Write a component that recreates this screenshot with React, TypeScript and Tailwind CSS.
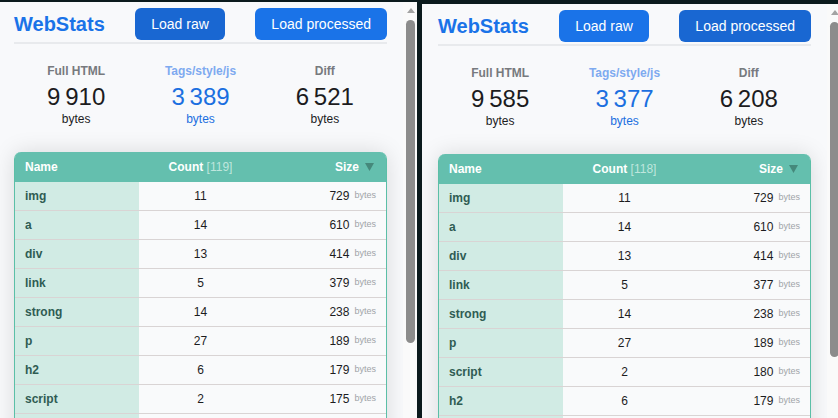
import type { ReactNode } from "react";

type Row = { name: string; count: number; size: number };

interface PanelData {
  full: string;
  tags: string;
  diff: string;
  total: number;
  rows: Row[];
  activeRaw: boolean;
}

const left: PanelData = {
  full: "9\u2009910",
  tags: "3\u2009389",
  diff: "6\u2009521",
  total: 119,
  activeRaw: true,
  rows: [
    { name: "img", count: 11, size: 729 },
    { name: "a", count: 14, size: 610 },
    { name: "div", count: 13, size: 414 },
    { name: "link", count: 5, size: 379 },
    { name: "strong", count: 14, size: 238 },
    { name: "p", count: 27, size: 189 },
    { name: "h2", count: 6, size: 179 },
    { name: "script", count: 2, size: 175 },
    { name: "span", count: 9, size: 160 },
  ],
};

const right: PanelData = {
  full: "9\u2009585",
  tags: "3\u2009377",
  diff: "6\u2009208",
  total: 118,
  activeRaw: false,
  rows: [
    { name: "img", count: 11, size: 729 },
    { name: "a", count: 14, size: 610 },
    { name: "div", count: 13, size: 414 },
    { name: "link", count: 5, size: 377 },
    { name: "strong", count: 14, size: 238 },
    { name: "p", count: 27, size: 189 },
    { name: "script", count: 2, size: 180 },
    { name: "h2", count: 6, size: 179 },
    { name: "span", count: 9, size: 160 },
  ],
};

function Stat({ label, value, blue }: { label: string; value: string; blue?: boolean }) {
  return (
    <div className="flex flex-col items-center">
      <div className={`text-[12px] font-bold leading-[14px] ${blue ? "text-[#7eaaf0]" : "text-[#777a7e]"}`}>
        {label}
      </div>
      <div className={`mt-[5px] text-[24px] leading-[28px] ${blue ? "text-[#1b6fe0]" : "text-[#1c1c1e]"}`}>
        {value}
      </div>
      <div className={`mt-[1px] text-[12px] leading-[14px] ${blue ? "text-[#1b6fe0]" : "text-[#1c1c1e]"}`}>bytes</div>
    </div>
  );
}

function Btn({ dark, children }: { dark: boolean; children: ReactNode }) {
  return (
    <button
      className={`h-8 rounded-[6px] px-4 text-[14px] text-white ${dark ? "bg-[#1967d2]" : "bg-[#1a73e8]"}`}
    >
      {children}
    </button>
  );
}

function Scrollbar({ thumb }: { thumb: number }) {
  return (
    <div className="w-[14px] shrink-0 bg-[#fafafa] pt-[6px]">
      <div className="ml-[3px] flex h-[5px] w-[9px] items-end justify-center">
        <svg width="8" height="5" viewBox="0 0 8 5">
          <path d="M0 5 L4 0 L8 5 Z" fill="#a3a3a3" />
        </svg>
      </div>
      <div className="ml-[3px] mt-[7px] w-[9px] rounded-full bg-[#8c8c8c]" style={{ height: thumb }} />
    </div>
  );
}

function Panel({ data, pl, thumb, className }: { data: PanelData; pl: string; thumb: number; className: string }) {
  return (
    <div className={`flex h-[418px] shrink-0 overflow-hidden bg-[#f8f9fb] ${className}`}>
      <div className={`w-[373px] shrink-0 pt-[6px] ${pl} box-content pr-[16px]`}>
        <div className="flex h-[36px] items-start justify-between border-b-2 border-[#e8eaed]">
          <div className="flex h-8 items-center text-[20px] font-bold text-[#1a73e8]">WebStats</div>
          <Btn dark={data.activeRaw}>Load raw</Btn>
          <Btn dark={!data.activeRaw}>Load processed</Btn>
        </div>

        <div className="grid grid-cols-3 pt-[20px]">
          <Stat label="Full HTML" value={data.full} />
          <Stat label="Tags/style/js" value={data.tags} blue />
          <Stat label="Diff" value={data.diff} />
        </div>

        <div className="mt-[26px] rounded-t-[7px] border-x border-[#5bbfa7] shadow-[0_0_22px_rgba(0,0,0,0.13)]">
          <div className="grid h-[30px] grid-cols-3 items-center rounded-t-[6px] bg-[#64bfae] text-[12px] font-bold text-white">
            <div className="pl-[10px]">Name</div>
            <div className="text-center">
              Count <span className="font-normal text-[#bfe6dd]">[{data.total}]</span>
            </div>
            <div className="flex items-center justify-end pr-[12px]">
              Size
              <svg className="ml-[6px]" width="9" height="8" viewBox="0 0 9 8">
                <path d="M0 0 L9 0 L4.5 8 Z" fill="#3f7f72" fillOpacity="0.85" />
              </svg>
            </div>
          </div>
          {data.rows.map((r) => (
            <div key={r.name} className="grid h-[29px] grid-cols-3 border-b border-[#d9d4d4] text-[12px]">
              <div className="flex items-center bg-[#d1ebe4] pl-[10px] font-bold text-[#2f5c53]">{r.name}</div>
              <div className="flex items-center justify-center bg-[#f9fafb] text-[#1c1c1e]">{r.count}</div>
              <div className="flex items-center justify-end bg-[#f9fafb] pr-[10px] text-[#1c1c1e]">
                {r.size}
                <span className="ml-[5px] text-[9px] text-[#a0a4a8]">bytes</span>
              </div>
            </div>
          ))}
        </div>
      </div>
      <Scrollbar thumb={thumb} />
    </div>
  );
}

export default function App() {
  return (
    <div
      className="flex h-[418px] w-[838px] gap-[5px] overflow-hidden bg-[#0b1a1d]"
      style={{ fontFamily: '"Liberation Sans", Arial, sans-serif' }}
    >
      <Panel data={left} pl="pl-[14px]" thumb={323} className="mt-[2px] w-[417px]" />
      <Panel data={right} pl="pl-[16px]" thumb={335} className="mt-[4px] w-[416px]" />
    </div>
  );
}
